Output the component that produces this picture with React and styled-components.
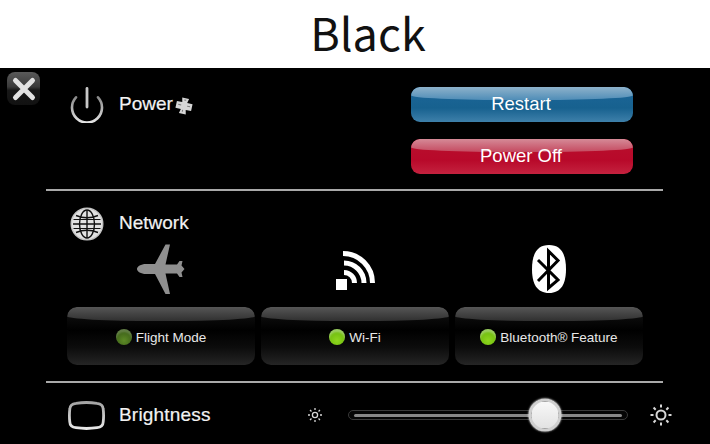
import React from "react";
import styled, { createGlobalStyle } from "styled-components";

const Global = createGlobalStyle`
  html, body { margin: 0; padding: 0; background: #fff; }
  body { width: 710px; height: 444px; overflow: hidden; }
`;
const Page = styled.div`width: 710px; height: 444px; display: flex; flex-direction: column;`;
const TitleBar = styled.header`
  height: 68px; background: #fff; color: #111; display: flex; align-items: center; justify-content: center;
  font: 400 45px/64px "Noto Sans CJK SC", "Noto Sans", sans-serif; padding: 0 0 4px 26px; box-sizing: border-box; width: 710px;
`;
const Screen = styled.main`
  position: relative; flex: 1; background: #000; color: #f2f2f2; display: flex; flex-direction: column;
  padding-left: 46px; font-family: "Liberation Sans", Arial, sans-serif;
`;
const CloseButton = styled.button`
  position: absolute; left: 7px; top: 4px; width: 33px; height: 33px; padding: 0; border: 0; border-radius: 8px;
  background: linear-gradient(#5a5a5a 0%, #3a3a3a 45%, #181818 55%, #111 100%);
  display: flex; align-items: center; justify-content: center;
`;
const Section = styled.section`
  width: 617px; box-sizing: border-box; display: flex; flex-direction: column; flex: none;
  height: ${p => p.$height}px;
  border-bottom: ${p => (p.$last ? "none" : "2px solid #a9a9a9")};
`;
const PowerRow = styled.div`
  display: flex; justify-content: space-between; padding: 19px 30px 0 24px;
`;
const HeadRow = styled.div`
  display: flex; align-items: center; gap: ${p => p.$gap ?? 16}px; height: 36px;
`;
const Label = styled.span`
  font-size: 19px; letter-spacing: ${p => p.$ls ?? 0}px; line-height: 22px; margin-bottom: ${p => p.$mb ?? 2}px;
  -webkit-text-stroke: 0.2px #f2f2f2;
`;
const ButtonStack = styled.div`display: flex; flex-direction: column; gap: 17px; width: 222px;`;
const GlossButton = styled.button`
  position: relative; overflow: hidden; height: 35px; padding: 0 2px 2px 0; border: 0; border-radius: 9px; color: #fff;
  font: 400 18.5px/33px "Liberation Sans", Arial, sans-serif;
  background: ${p => p.$tone === "red"
    ? "linear-gradient(#b8102d 0%, #b8092a 60%, #c4223f 100%)"
    : "linear-gradient(#1c6699 0%, #17618f 60%, #3e80aa 100%)"};
  &::before {
    content: ""; position: absolute; left: 0; right: 0; top: 0; height: 13px; border-radius: 9px 9px 50% 50% / 9px 9px 5px 5px;
    background: ${p => p.$tone === "red"
      ? "linear-gradient(#d58a97, #c54a60)"
      : "linear-gradient(#8eb2cb, #4f8db7)"};
  }
  & > span { position: relative; }
`;
const NetworkHead = styled(HeadRow)`padding: 16px 0 0 24px; height: 33px;`;
const Columns = styled.div`display: grid; grid-template-columns: repeat(3, 188px); column-gap: 6px; padding-left: 21px;`;
const IconCell = styled.div`
  height: 67px; padding-top: ${p => p.$top}px; box-sizing: border-box; display: flex; justify-content: center; align-items: flex-start;
`;
const Card = styled.div`
  position: relative; overflow: hidden; height: 58px; border-radius: 10px; display: flex; align-items: center; justify-content: center;
  gap: 4px; padding-top: 2px; box-sizing: border-box; font-size: 13.5px; color: #e8e8e8;
  background: linear-gradient(#0a0a0a 20%, #000 40%, #0c0c0c 70%, #252525 100%);
  & > * { position: relative; }
  &::before {
    content: ""; position: absolute; left: 0; right: 0; top: 0; height: 14px; border-radius: 10px 10px 50% 50% / 10px 10px 5px 5px;
    background: linear-gradient(#565656, #303030);
  }
`;
const Led = styled.span`
  width: 16px; height: 16px; border-radius: 50%; flex: none;
  background: ${p => p.$on
    ? "radial-gradient(circle at 50% 72%, #8ed61e 0%, #74c010 55%, #4f9a08 100%)"
    : "radial-gradient(circle at 50% 72%, #5d8a26 0%, #41661a 60%, #2e4a12 100%)"};
  box-shadow: inset 0 3px 2px rgba(255,255,255,${p => (p.$on ? 0.35 : 0.2)});
`;
const BrightRow = styled.div`
  display: flex; align-items: center; height: 61px; box-sizing: border-box; padding: 3px 0 0 22px;
`;
const TvWrap = styled.div`width: 37px; height: 29px; flex: none; margin-right: 14px; display: flex;`;
const SmallSun = styled.div`margin-left: 96px; width: 16px; height: 16px; flex: none; display: flex;`;
const Track = styled.div`
  position: relative; margin-left: 25px; width: 280px; height: 10px; box-sizing: border-box; flex: none; border-radius: 5px;
  background: #050505; border: 1px solid #3a3a3a; display: flex; align-items: center; padding: 0 5px;
  &::before { content: ""; flex: 1; height: 3px; border-radius: 2px; background: #888; }
`;
const Thumb = styled.div`
  position: absolute; top: 50%; width: 33px; height: 33px; border-radius: 50%; transform: translate(-50%, -50%);
  background: linear-gradient(#f8f8f8, #e2e2e2); border: 3px solid #cfcfcf; box-sizing: border-box;
  box-shadow: 0 0 2px #fff;
`;
const BigSun = styled.div`margin-left: 22px; width: 22px; height: 22px; flex: none; display: flex;`;

const PowerIcon = () => (
  <svg width="34" height="36" viewBox="0 0 34 36" fill="none">
    <defs><linearGradient id="pw" x1="0" y1="0" x2="0" y2="1"><stop offset="0" stopColor="#8a8a8a"/><stop offset="1" stopColor="#e4e4e4"/></linearGradient></defs>
    <path d="M6 10.3 A15 15 0 1 0 28 10.3" stroke="url(#pw)" strokeWidth="2.6" strokeLinecap="round"/>
    <path d="M17 1.5 V20" stroke="#c8c8c8" strokeWidth="2.8" strokeLinecap="round"/>
  </svg>
);
const PlusMark = () => (
  <svg width="18" height="18" viewBox="0 0 18 18" style={{ marginLeft: -13, marginTop: 1 }}>
    <g transform="rotate(12 9 9)">
      <path d="M5.5 1 H12.5 L11.5 5.5 H17 V12.5 H11.5 L12.5 17 H5.5 L6.5 12.5 H1 V5.5 H6.5 Z" fill="#d6d6d6"/>
      <path d="M8 3 H10 M3 8.5 H6 M12 8.5 H15 M8.5 13 V15" stroke="#777" strokeWidth="1"/>
    </g>
  </svg>
);
const Globe = () => (
  <svg width="34" height="34" viewBox="0 0 34 34" fill="none">
    <circle cx="17" cy="17" r="15.8" fill="#e2e2e2" stroke="#c4c4c4" strokeWidth="1.4"/>
    <g stroke="#111" strokeWidth="1.4">
      <ellipse cx="17" cy="17" rx="7.5" ry="14"/>
      <path d="M17 3 V31 M3 17 H31"/>
      <path d="M6 8.5 Q17 13 28 8.5 M6 25.5 Q17 21 28 25.5"/>
      <path d="M3.5 12.5 H30.5 M3.5 21.5 H30.5" strokeWidth="1.1"/>
    </g>
  </svg>
);
const Plane = () => (
  <svg width="50" height="50" viewBox="0 0 50 50">
    <path d="M1 25 C1 22.5 5 20 10 20 H19 L29.5 0.5 H34 L29.5 20.5 H41 L43.5 17 H46.5 L45.5 21.5 L48.5 25 L45.5 28.5 L46.5 33 H43.5 L41 29.5 H29.5 L34 50 H29.5 L19 30 H10 C5 30 1 27.5 1 25 Z" fill="#8f8f8f"/>
  </svg>
);
const Wifi = () => (
  <svg width="40" height="40" viewBox="0 0 40 40" fill="none">
    <rect x="1" y="28" width="11" height="11" fill="#fff"/>
    <g stroke="#fff" strokeWidth="5">
      <path d="M9 21.5 A10.5 10.5 0 0 1 19.5 32"/>
      <path d="M9 12 A20 20 0 0 1 29 32"/>
      <path d="M8 2.5 A29.5 29.5 0 0 1 37.5 32"/>
    </g>
  </svg>
);
const Bluetooth = () => (
  <svg width="36" height="48" viewBox="0 0 36 48" fill="none">
    <path d="M18 0 C30 0 35 9 35 24 C35 39 30 48 18 48 C6 48 1 39 1 24 C1 9 6 0 18 0 Z" fill="#fff"/>
    <path d="M7 15 L27 35 L17.5 43 V6 L27 15.5 L7 36" stroke="#000" strokeWidth="3" strokeLinejoin="miter"/>
  </svg>
);
const Tv = () => (
  <svg width="37" height="29" viewBox="0 0 37 29" fill="none">
    <defs><linearGradient id="tv" x1="0" y1="0" x2="0" y2="1"><stop offset="0" stopColor="#a4a4a4"/><stop offset="1" stopColor="#e8e8e8"/></linearGradient></defs>
    <path d="M8 2.3 Q18.5 0.7 29 2.3 Q35 3 35.2 8 Q36 14.5 35.2 21 Q35 26 29 26.7 Q18.5 28.3 8 26.7 Q2 26 1.8 21 Q1 14.5 1.8 8 Q2 3 8 2.3 Z" stroke="url(#tv)" strokeWidth="2.8"/>
  </svg>
);
const Sun = ({ size, r, stroke, inner, outer }) => {
  const c = size / 2;
  const rays = Array.from({ length: 8 }, (_, i) => {
    const a = (i * Math.PI) / 4;
    return <line key={i} x1={c + inner * Math.cos(a)} y1={c + inner * Math.sin(a)} x2={c + outer * Math.cos(a)} y2={c + outer * Math.sin(a)} />;
  });
  return (
    <svg width={size} height={size} viewBox={`0 0 ${size} ${size}`} fill="none" stroke="#d8d8d8" strokeWidth={stroke}>
      <circle cx={c} cy={c} r={r}/>
      {rays}
    </svg>
  );
};
const CloseX = () => (
  <svg width="26" height="26" viewBox="0 0 26 26" fill="none">
    <path d="M4.5 4.5 L21.5 21.5 M21.5 4.5 L4.5 21.5" stroke="#e2e2e2" strokeWidth="5" strokeLinecap="round"/>
  </svg>
);

const networks = [
  { icon: <Plane />, top: 4, label: "Flight Mode", on: false },
  { icon: <Wifi />, top: 11, label: "Wi-Fi", on: true },
  { icon: <Bluetooth />, top: 5, label: "Bluetooth® Feature", on: true },
];

export default function App() {
  return (
    <Page>
      <Global />
      <TitleBar>Black</TitleBar>
      <Screen>
        <CloseButton aria-label="Close"><CloseX /></CloseButton>
        <Section $height={123}>
          <PowerRow>
            <HeadRow $gap={15}>
              <PowerIcon />
              <Label>Power</Label>
              <PlusMark />
            </HeadRow>
            <ButtonStack>
              <GlossButton $tone="blue"><span>Restart</span></GlossButton>
              <GlossButton $tone="red"><span>Power Off</span></GlossButton>
            </ButtonStack>
          </PowerRow>
        </Section>
        <Section $height={192}>
          <NetworkHead $gap={15}>
            <Globe />
            <Label>Network</Label>
          </NetworkHead>
          <Columns>
            {networks.map(n => <IconCell key={n.label} $top={n.top}>{n.icon}</IconCell>)}
            {networks.map(n => (
              <Card key={n.label}>
                <Led $on={n.on} />
                <span>{n.label}</span>
              </Card>
            ))}
          </Columns>
        </Section>
        <Section $height={61} $last>
          <BrightRow>
            <TvWrap><Tv /></TvWrap>
            <Label $ls={0.2} $mb={0}>Brightness</Label>
            <SmallSun><Sun size={16} r={2.6} stroke={1.3} inner={5} outer={7} /></SmallSun>
            <Track><Thumb style={{ left: "70.7%" }} /></Track>
            <BigSun><Sun size={22} r={4.5} stroke={2} inner={7.5} outer={10.5} /></BigSun>
          </BrightRow>
        </Section>
      </Screen>
    </Page>
  );
}
